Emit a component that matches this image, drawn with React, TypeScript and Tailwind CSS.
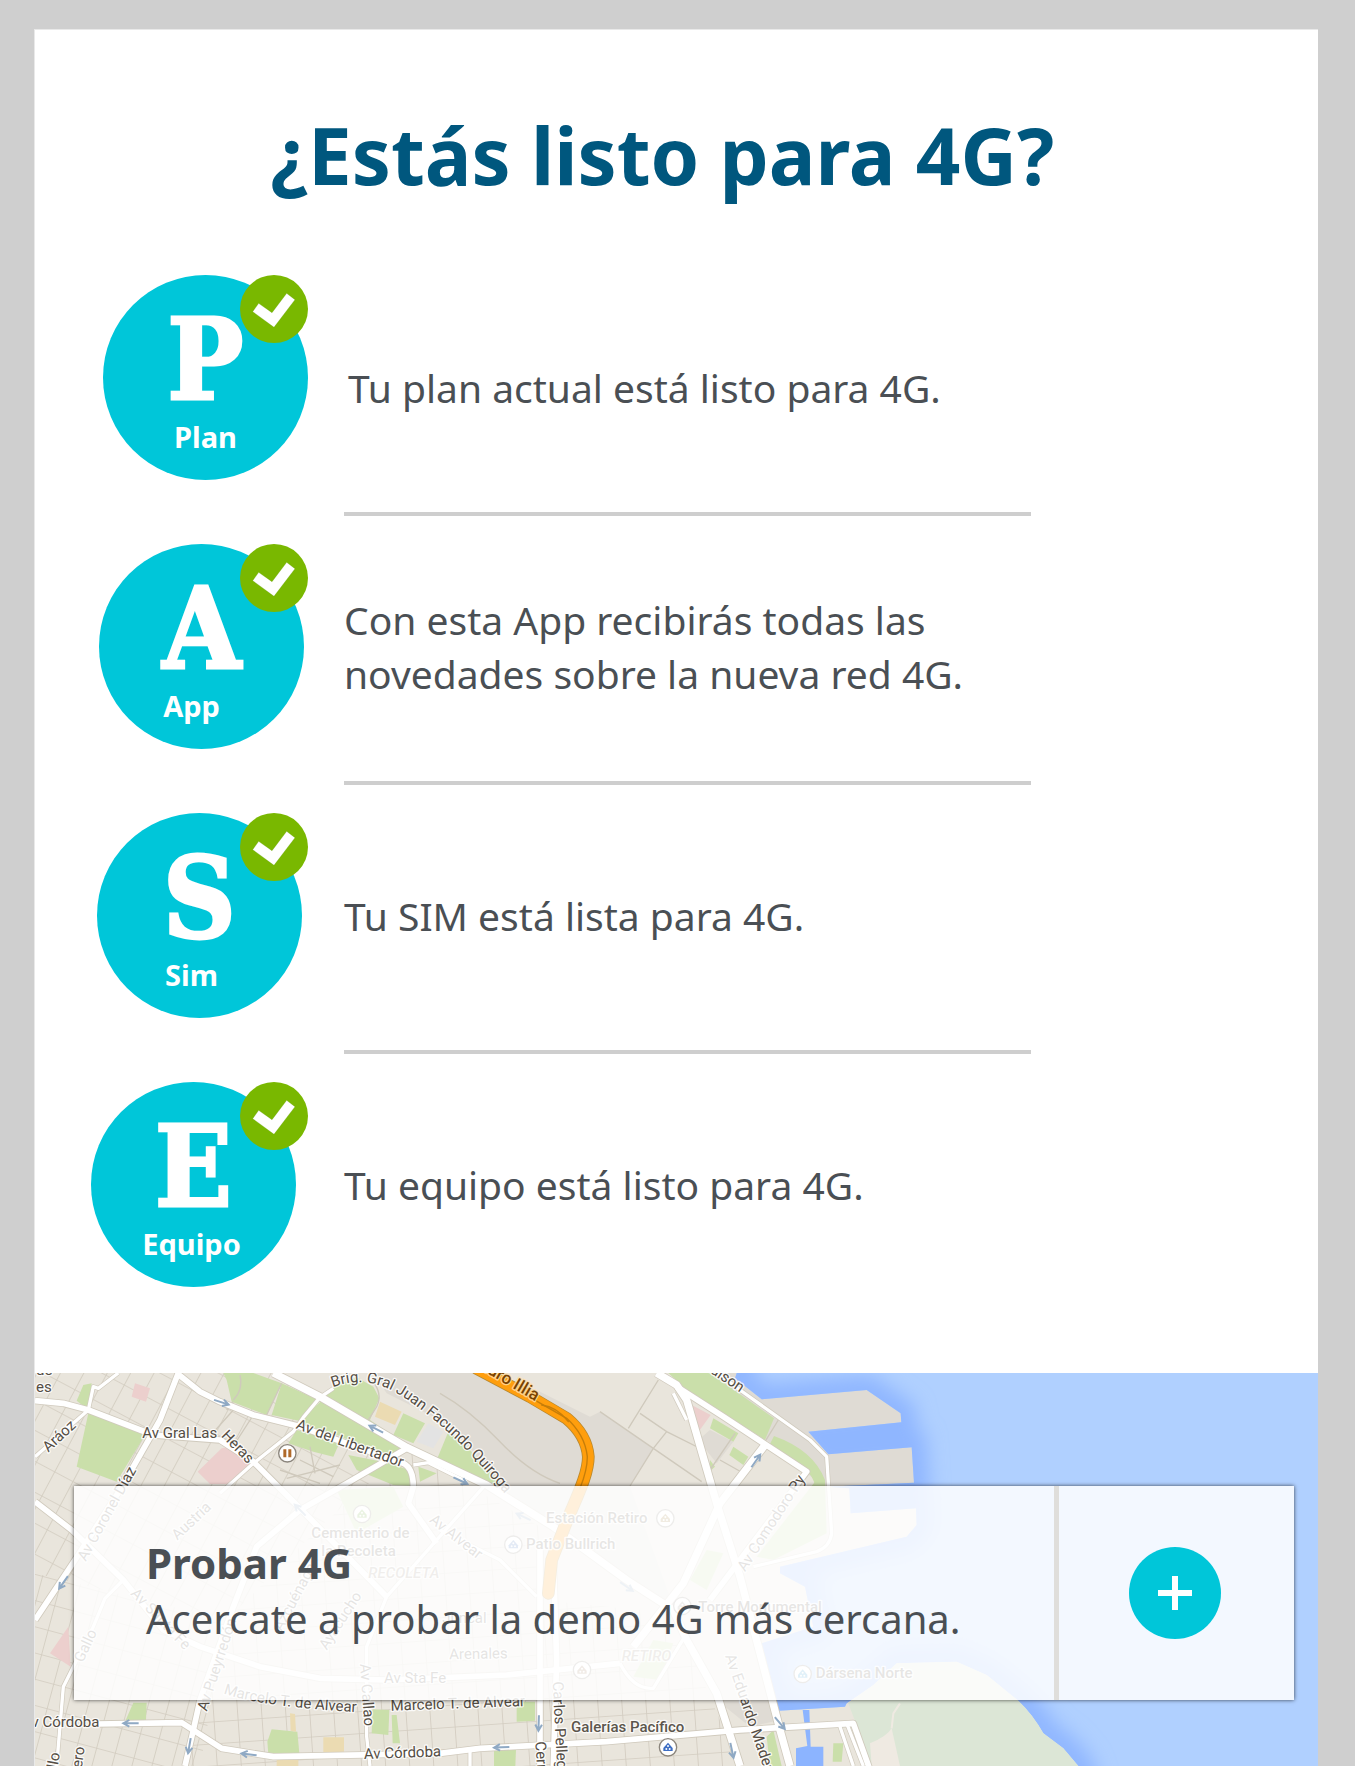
type Step = {
  letter: string;
  label: string;
  text: string;
  discClass: string;
  labelClass: string;
  textClass: string;
};

const steps: Step[] = [
  { letter: "P", label: "Plan", text: "Tu plan actual está listo para 4G.", discClass: "ml-3", labelClass: "", textClass: "pl-1 pt-5" },
  { letter: "A", label: "App", text: "Con esta App recibirás todas las novedades sobre la nueva red 4G.", discClass: "ml-2", labelClass: "pr-5", textClass: "" },
  { letter: "S", label: "Sim", text: "Tu SIM está lista para 4G.", discClass: "ml-1.5", labelClass: "pr-4", textClass: "" },
  { letter: "E", label: "Equipo", text: "Tu equipo está listo para 4G.", discClass: "ml-0", labelClass: "pr-1", textClass: "" },
];

function CheckBadge() {
  return (
    <svg className="absolute top-0 right-0 size-[68px]" viewBox="0 0 204 204" aria-hidden="true">
      <circle cx="102" cy="102" r="102" fill="#79b800" />
      <path d="M38 110 56 85 96 113 140 55 165 74 102 157Z" fill="#fff" stroke="#5f9a00" strokeOpacity=".45" strokeWidth="2" />
    </svg>
  );
}

function StepRow({ step, last }: { step: Step; last: boolean }) {
  return (
    <li className="flex gap-9">
      <div className="relative h-[205px] w-[217px] shrink-0">
        <div
          className={`flex size-[205px] flex-col items-center rounded-full bg-[#00c6d9] pt-7 text-white ${step.discClass}`}
        >
          <span className="font-['DejaVu_Serif_Condensed','DejaVu_Serif',serif] text-[112px] leading-[114px] font-bold [-webkit-text-stroke:3px_#fff]">
            {step.letter}
          </span>
          <span className={`text-[29px] leading-10 font-bold ${step.labelClass}`}>{step.label}</span>
        </div>
        <CheckBadge />
      </div>
      <div className="max-w-[687px] flex-1">
        <p className={`flex h-[205px] items-center text-[39px] leading-[54px] ${step.textClass}`}>{step.text}</p>
        {!last && <hr className="mt-8 mb-7 border-t-4 border-[#cecece]" />}
      </div>
    </li>
  );
}

/* ---------- Map ---------- */

const waterShape =
  "M2145 55 2260 -300H4300V1600H3300L3175 1218 3130 1165 3070 1120Q3040 1065 2995 1022L2900 945 2810 905 2630 910 2560 975 2480 1030 2475 1040 2275 1052 2225 850 2380 800 2355 680 2280 640V620L2660 530 2690 495 2688 445 2492 460 2488 385 2420 380 2682 368 2675 262 2425 283 2365 215 2644 187 2642 160 2540 90 2225 118Z";

const parks = [
  "205,160 375,225 290,365 170,320",
  "190,75 215,70 205,150 170,122",
  "610,39 700,39 785,70 740,165 635,125 620,60",
  "785,70 900,122 850,185 755,165",
  "905,122 945,78 1010,52 1060,80 1078,115 1050,180 1160,255 1110,300 960,228 830,190",
  "830,210 960,245 940,290 880,275 805,250",
  "985,285 1110,310 1180,335 1180,378 1120,375 1010,330",
  "1150,160 1215,190 1180,250 1120,225",
  "1195,320 1250,340 1200,365",
  "1285,215 1355,275 1450,382 1410,378 1250,300",
  "340,1028 380,1028 378,1080 315,1085",
  "755,1108 832,1115 838,1180 745,1182 742,1145",
  "1058,1048 1108,1050 1105,1125 1055,1120",
  "1115,1065 1130,1065 1140,1150 1118,1150",
  "1490,1025 1545,1025 1545,1082 1490,1085",
  "1422,1168 1488,1168 1486,1218 1422,1218",
  "1945,39 2070,39 2262,175 2235,240 2000,90",
  "2080,175 2155,220 2140,245 2070,205",
  "2140,260 2185,290 2170,315 2128,285",
  "2070,300 2085,320 2068,335",
  "2385,365 2415,365 2420,520 2260,600 2210,590",
  "2060,570 2110,580 2060,690 2010,660",
  "1900,840 1960,850 1920,960 1840,950",
  "950,390 1120,380 1150,440 1010,520",
  "2240,1130 2260,1110 2285,1218 2250,1218",
  "2440,1150 2470,1150 2465,1205 2438,1205",
];

const hospitals = [
  "605,265 640,258 695,310 635,372 570,372 533,335",
  "345,70 390,85 378,125 335,110",
  "145,800 152,920 90,880",
  "2015,135 2072,165 2038,212",
];

const schools = [
  "1080,125 1145,155 1125,195 1065,170",
  "910,1132 972,1132 972,1175 910,1178",
  "810,1060 825,1062 828,1115 812,1112",
  "770,1200 835,1200 835,1218 770,1218",
];

const mainRoads = [
  "M45 122 130 130 205 150 400 225 600 240 700 305 775 380 840 445 1100 710",
  "M475 39 420 180 380 250 300 390 165 600 45 780",
  "M470 39 540 95 600 125 700 165 830 197 1150 310Q1180 325 1180 380L1165 430 1250 550",
  "M1160 265 980 370 840 450 710 560 640 740 540 1020 520 1110 495 1218",
  "M45 425 155 510 310 660 430 810 540 860 720 920 900 955 1100 960 1460 945 1800 910",
  "M230 1092 485 1088 605 1165 760 1190 1260 1180 1380 1165 1760 1145 2160 1110 2500 1090 2550 1230",
  "M1970 80 2110 170 2360 335 2160 600 2070 720",
  "M1560 560 1560 1218",
  "M1600 600 1610 900 1600 1218",
];

const avenues = [
  "M760 39 900 110 1160 262 1400 375 1600 500 1820 660 1960 750 2000 840 2090 1000 2160 1218",
  "M1910 39 1970 75 2000 120 2090 430 2160 650 2220 880 2280 1110 2310 1218",
  "M2235 255 2100 430 1990 670 1840 860",
];

const smallRoads = [
  "M295 39 235 85 220 80 205 150 45 290",
  "M940 85 900 112 850 172 820 215 700 310 600 400",
  "M310 660 255 715 220 800 130 980 110 1218",
  "M1400 370 1100 710 1040 860 1040 1130 1050 1218",
  "M1180 315 1225 308 1340 365",
  "M2080 30 2160 90 2370 240 2420 290 2435 520Q2430 560 2390 575L2200 620",
  "M1960 100 2000 180",
  "M2460 1100 2500 1218M2480 1090 2530 1218",
  "M1800 910Q1840 990 1900 985L2000 820",
  "M1260 510 1440 600 1550 710",
  "M1350 1165V1218",
];

const lanes = [
  "M640 125 620 150M660 45Q670 90 640 120",
  "M1055 60Q1090 100 1070 140L1045 180",
  "M1915 60 1825 205M1860 160 1940 215 2050 270M1740 155 1900 265 2045 365M1900 265 1830 378M1940 215 1900 265",
  "M2145 220 2070 330M2100 300 2180 345M2180 220 2230 250M2275 180 2235 245",
  "M1260 100Q1350 150 1440 245T1620 370",
  "M800 355 960 315M870 260 885 340M840 300 940 350M780 330 900 370",
  "M740 165 785 70M700 165 640 258M640 150 560 240",
];

const arrows: [number, number, number][] = [
  [605, 127, 18],
  [1068, 207, 207],
  [1322, 362, 25],
  [130, 668, 125],
  [332, 1090, 180],
  [508, 1158, 100],
  [686, 1183, 187],
  [1556, 1090, 92],
  [1444, 1162, 178],
  [2208, 302, -55],
  [2280, 1090, 50],
  [2136, 1172, 78],
  [840, 450, 225],
  [1510, 470, 205],
  [1820, 680, 35],
];

type Label = { x: number; y: number; r?: number; t: string; end?: boolean };

const streetLabels: Label[] = [
  { x: 48, y: 97, t: "es" },
  { x: 48, y: 46, t: "de" },
  { x: 85, y: 278, r: -43, t: "Aráoz" },
  { x: 367, y: 235, t: "Av Gral Las" },
  { x: 602, y: 228, r: 46, t: "Heras" },
  { x: 197, y: 606, r: -61, t: "Av Coronel Díaz" },
  { x: 472, y: 542, r: -43, t: "Austria" },
  { x: 1226, y: 484, r: 38, t: "Av Alvear" },
  { x: 188, y: 910, r: -65, t: "Gallo" },
  { x: 330, y: 702, r: 46, t: "Av Santa Fe" },
  { x: 560, y: 1055, r: -72, t: "Av Pueyrredón" },
  { x: 785, y: 816, r: -62, t: "Azcuénaga" },
  { x: 920, y: 872, r: -57, t: "Ayacucho" },
  { x: 1092, y: 968, t: "Av Sta Fe" },
  { x: 1020, y: 912, r: 86, t: "Av Callao" },
  { x: 1288, y: 898, r: -1, t: "Arenales" },
  { x: 1112, y: 1052, r: -2, t: "Marcelo T. de Alvear" },
  { x: 238, y: 1102, t: "Av Córdoba", end: true },
  { x: 1032, y: 1197, r: -2, t: "Av Córdoba" },
  { x: 120, y: 1180, r: -80, t: "Gallo", end: true },
  { x: 194, y: 1162, r: -82, t: "Agüero", end: true },
  { x: 1400, y: 790, t: "Juncal", end: true },
  { x: 2160, y: 98, r: 34, t: "Edison", end: true },
  { x: 2175, y: 637, r: -57, t: "Av Comodoro Py" },
  { x: 2115, y: 888, r: 71, t: "Av Eduardo Madero" },
  { x: 1598, y: 965, r: 87, t: "Carlos Pellegrini" },
  { x: 1546, y: 1145, r: 86, t: "Cerrito" },
];

const placeLabels: Label[] = [
  { x: 874, y: 533, t: "Cementerio de" },
  { x: 904, y: 588, t: "la Recoleta" },
  { x: 1578, y: 490, t: "Estación Retiro" },
  { x: 1518, y: 566, t: "Patio Bullrich" },
  { x: 2035, y: 755, t: "Torre Monumental" },
  { x: 2387, y: 955, t: "Dársena Norte" },
  { x: 1653, y: 1115, t: "Galerías Pacífico" },
];

function MapLabel({ x, y, r = 0, t, end }: Label) {
  return (
    <text transform={`translate(${x} ${y}) rotate(${r})`} textAnchor={end ? "end" : "start"}>
      {t}
    </text>
  );
}

function Pin({ x, y, color }: { x: number; y: number; color: string }) {
  return (
    <g transform={`translate(${x} ${y})`}>
      <circle r="26" fill="#fff" stroke="#8b857c" strokeWidth="4" />
      <path d="M-14 11V2L0-14 14 2V11Z" fill={color} />
      <circle cx="0" cy="-4" r="3" fill="#fff" />
      <circle cx="-5" cy="5" r="3" fill="#fff" />
      <circle cx="5" cy="5" r="3" fill="#fff" />
    </g>
  );
}

function CityMap() {
  return (
    <svg
      className="absolute inset-0 size-full"
      viewBox="45 39 3852 1179"
      preserveAspectRatio="xMinYMin slice"
      role="img"
      aria-label="Mapa de Buenos Aires"
    >
      <defs>
        <pattern id="diag" width="62" height="82" patternUnits="userSpaceOnUse" patternTransform="rotate(28)">
          <path d="M0 0H62M0 0V82" stroke="#d2ccc0" strokeWidth="5" fill="none" />
        </pattern>
        <pattern id="west" width="58" height="76" patternUnits="userSpaceOnUse" patternTransform="rotate(15)">
          <path d="M0 0H58M0 0V76" stroke="#d2ccc0" strokeWidth="5" fill="none" />
        </pattern>
        <pattern id="south" width="72" height="66" patternUnits="userSpaceOnUse" patternTransform="rotate(-4)">
          <path d="M0 0H72M0 0V66" stroke="#d2ccc0" strokeWidth="5" fill="none" />
        </pattern>
        <clipPath id="sea">
          <path d={waterShape} />
        </clipPath>
        <filter id="soft" x="-5%" y="-5%" width="110%" height="110%">
          <feGaussianBlur stdDeviation="28" />
        </filter>
        <path id="quiroga" d="M938 82Q1040 42 1140 105C1250 175 1350 270 1470 420" />
        <path id="libertador" d="M826 205C940 250 1050 288 1190 338" />
        <path id="marcelo" d="M610 1000Q720 1040 1020 1057" />
        <path id="illia" d="M1340 4 1560 132" />
      </defs>

      <rect x="45" y="39" width="3852" height="1179" fill="#e9e5dc" />
      <path d="M45 39H760L1160 270 900 500 620 780 45 640Z" fill="url(#diag)" />
      <path d="M45 640 620 780 540 1218H45Z" fill="url(#west)" />
      <path d="M900 500 1160 270 1560 500 1560 1218H500L620 780Z" fill="url(#south)" />
      <path d="M1560 720 1960 760 2160 1218H1560Z" fill="url(#south)" />

      <path
        d="M1060 39H1420L1560 95 1710 170 1740 155 1900 265 1830 380 1960 740 1600 500 1450 390 1300 200 1100 100Z"
        fill="#dfdbd4"
      />
      <path d="M2070 210 2140 245 2090 310 2035 240Z" fill="#dfdbd4" />
      <path d="M2070 39H2260L2700 60V380H2410L2240 240Z" fill="#dfdbd4" />
      <path d="M1190 245 1225 190 1270 215 1240 265Z" fill="#e3e3e3" />
      <path d="M2090 1020H2280V1080L2190 1100Z" fill="#dfdbd4" />

      <g fill="#cadfaa">
        {parks.map((p) => (
          <polygon key={p} points={p} />
        ))}
        <path d="M2262 228Q2380 270 2415 360V380H2385Q2380 320 2245 262Z" />
      </g>
      <g fill="#eccfcd">
        {hospitals.map((p) => (
          <polygon key={p} points={p} />
        ))}
      </g>
      <g fill="#ebdbb2">
        {schools.map((p) => (
          <polygon key={p} points={p} />
        ))}
      </g>

      <path d={waterShape} fill="#b0d0ff" />
      <g clipPath="url(#sea)">
        <path d={waterShape} fill="none" stroke="#8fb6ff" strokeWidth="90" filter="url(#soft)" />
      </g>
      <path d="M2348 1050H2368L2372 1160H2410V1218H2328V1165L2362 1158Z" fill="#8cb4ff" />
      <path d="M2485 1030 2560 975 2630 910 2810 905 2900 945 2995 1022Q3040 1065 3070 1120L3130 1165 3175 1218H2555Z" fill="#dce6d6" />
      <path d="M2550 1150Q2600 1130 2615 1105L2640 1218H2555Z" fill="#efeae2" />
      <path d="M2615 1105 2620 1060 2640 1030" fill="none" stroke="#efeae2" strokeWidth="6" />

      <g fill="none" stroke="#cfc9bc" strokeWidth="4">
        {lanes.map((d) => (
          <path key={d} d={d} />
        ))}
      </g>
      <g fill="none" stroke="#d0cabd" strokeLinejoin="round">
        {smallRoads.map((d) => (
          <path key={d} d={d} strokeWidth="14" />
        ))}
        {mainRoads.map((d) => (
          <path key={d} d={d} strokeWidth="22" />
        ))}
        {avenues.map((d) => (
          <path key={d} d={d} strokeWidth="27" />
        ))}
      </g>
      <g fill="none" stroke="#fff" strokeLinejoin="round">
        {smallRoads.map((d) => (
          <path key={d} d={d} strokeWidth="10" />
        ))}
        {mainRoads.map((d) => (
          <path key={d} d={d} strokeWidth="17" />
        ))}
        {avenues.map((d) => (
          <path key={d} d={d} strokeWidth="22" />
        ))}
      </g>

      <g fill="none" strokeLinecap="round">
        <path d="M1370 25 1530 110 1640 175Q1700 225 1705 290C1705 350 1660 430 1630 510L1595 600 1585 700" stroke="#b9892f" strokeWidth="38" />
        <path d="M1370 25 1530 110 1640 175Q1700 225 1705 290C1705 350 1660 430 1630 510L1595 600 1585 700" stroke="#ff9e0d" strokeWidth="33" />
        <path d="M1500 95 1640 175Q1695 225 1702 290 1702 330 1680 385" stroke="#c57d0a" strokeWidth="4" />
        <path d="M1565 135Q1610 140 1645 185" stroke="#c57d0a" strokeWidth="4" />
      </g>

      <g fill="none" stroke="#8fa9c4" strokeWidth="6">
        {arrows.map(([x, y, r]) => (
          <path key={`${x}-${y}`} transform={`translate(${x} ${y}) rotate(${r})`} d="M-24 0H20M4-10 22 0 4 10" />
        ))}
      </g>

      <Pin x={1936} y={475} color="#a08040" />
      <Pin x={1480} y={554} color="#4a77c0" />
      <Pin x={1987} y={738} color="#a09890" />
      <Pin x={1686} y={930} color="#a08060" />
      <Pin x={2348} y={942} color="#3aa0d8" />
      <Pin x={1944} y={1162} color="#3f6fc4" />
      <Pin x={1026} y={462} color="#76b043" />
      <g transform="translate(802 280)">
        <circle r="26" fill="#fff" stroke="#8b857c" strokeWidth="4" />
        <path d="M-12-12H-3V12H-12ZM3-12H12V12H3Z" fill="#b06a2a" />
      </g>

      <g
        className="font-[Roboto,sans-serif]"
        fill="#544d44"
        stroke="#fff"
        strokeOpacity=".8"
        strokeWidth="8"
        strokeLinejoin="round"
        paintOrder="stroke"
        fontSize="45"
      >
        {streetLabels.map((l) => (
          <MapLabel key={`${l.t}-${l.x}`} {...l} />
        ))}
        <text>
          <textPath href="#quiroga">Brig. Gral Juan Facundo Quiroga</textPath>
        </text>
        <text>
          <textPath href="#libertador">Av del Libertador</textPath>
        </text>
        <text>
          <textPath href="#marcelo">Marcelo T. de Alvear</textPath>
        </text>
        <g fill="#5c564d" fontWeight="500">
          {placeLabels.map((l) => (
            <MapLabel key={l.t} {...l} />
          ))}
        </g>
        <g fill="#9a8f80" fontStyle="italic" fontWeight="500">
          <MapLabel x={1045} y={655} t="RECOLETA" />
          <MapLabel x={1805} y={902} t="RETIRO" />
        </g>
        <text fill="#7a4300" stroke="#ffe0a8" fontSize="51" fontWeight="500">
          <textPath href="#illia">Arturo Illia</textPath>
        </text>
      </g>
    </svg>
  );
}

export default function App() {
  return (
    <div className="min-h-screen bg-[#cfcfcf] pt-[29px] pr-[37px] pl-[34px] font-['Noto_Sans',sans-serif] text-[#4a4f54]">
      <main className="border-t border-l border-[#e9e9e9] bg-white">
        <section className="pt-[72px] pb-[86px]">
          <h1 className="pr-7 text-center text-[78px] leading-[106px] font-bold text-[#00577e]">¿Estás listo para 4G?</h1>
          <ul className="mt-[67px] pl-14">
            {steps.map((step, i) => (
              <StepRow key={step.letter} step={step} last={i === steps.length - 1} />
            ))}
          </ul>
        </section>

        <section className="relative overflow-hidden pt-[113px] pr-6 pb-[66px] pl-[39px]">
          <CityMap />
          <div className="relative flex min-h-[214px] items-stretch bg-white/85 shadow-[0_0_4px_rgba(0,0,0,0.7)]">
            <div className="flex flex-1 flex-col justify-center pb-1 pl-[72px]">
              <h2 className="text-[42px] leading-14 font-bold">Probar 4G</h2>
              <p className="text-[40px] leading-14">Acercate a probar la demo 4G más cercana.</p>
            </div>
            <div className="flex w-60 shrink-0 items-center justify-center border-l-[5px] border-[#dfdedb] pr-1">
              <button
                type="button"
                aria-label="Ver más"
                className="flex size-[92px] items-center justify-center rounded-full bg-[#00c6d9]"
              >
                <svg className="size-[34px]" viewBox="0 0 34 34" fill="none" stroke="#fff" strokeWidth="6" aria-hidden="true">
                  <path d="M17 0V34M0 17H34" />
                </svg>
              </button>
            </div>
          </div>
        </section>
      </main>
    </div>
  );
}
